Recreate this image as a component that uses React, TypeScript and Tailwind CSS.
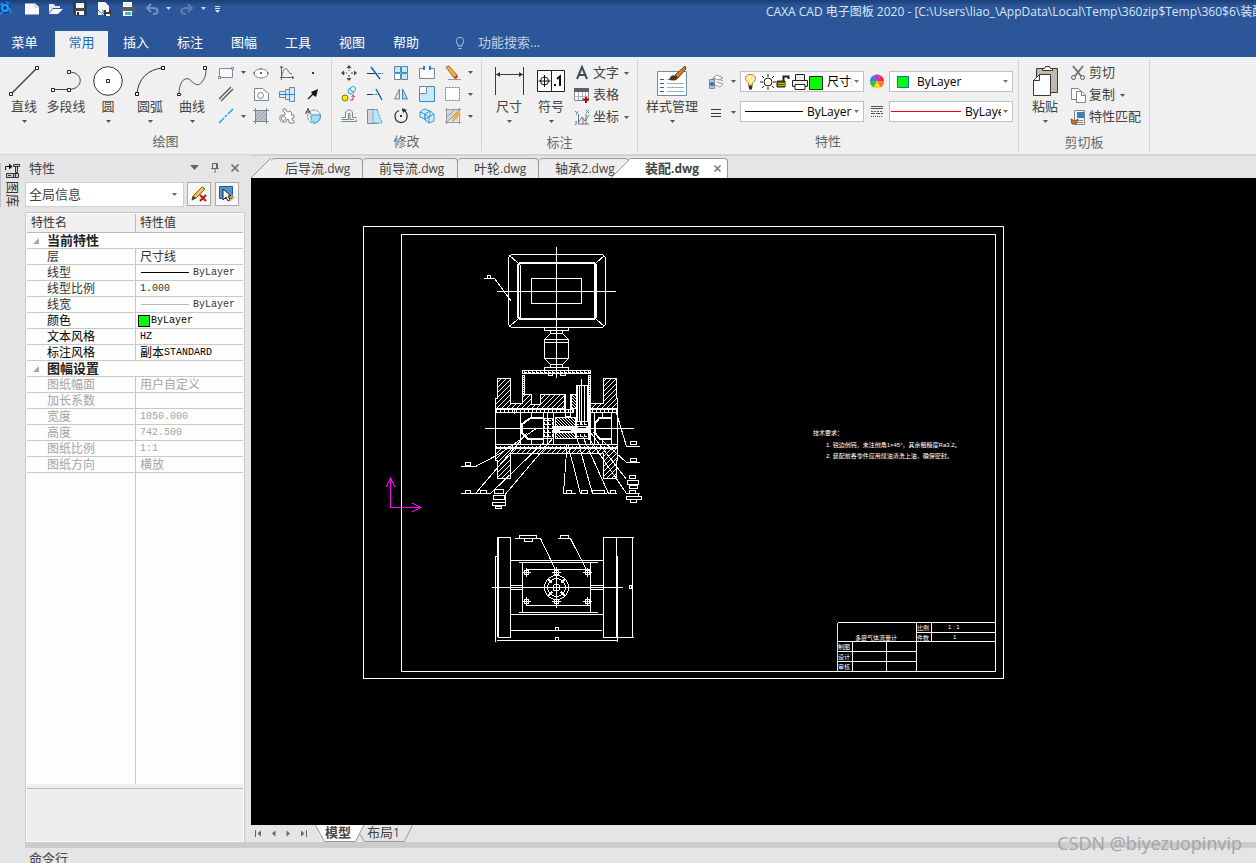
import type { ReactNode } from "react";

/* ---------- shared pieces ---------- */

function Caret({ className = "text-[#555]" }: { className?: string }) {
  return (
    <svg width="5" height="3" viewBox="0 0 5 3" className={`shrink-0 ${className}`} aria-hidden="true">
      <path d="M0 0H5L2.5 3Z" fill="currentColor" />
    </svg>
  );
}

function Icon({ children, size = 16 }: { children: ReactNode; size?: number }) {
  return (
    <svg width={size} height={size} viewBox={`0 0 ${size} ${size}`} fill="none" stroke="#7a8794" className="shrink-0" aria-hidden="true">
      {children}
    </svg>
  );
}

function TallButton({ label, icon, caret = true, wide = false }: { label: string; icon: ReactNode; caret?: boolean; wide?: boolean }) {
  return (
    <button type="button" className={`flex h-full flex-col items-center pt-1 ${wide ? "w-14" : "w-[42px]"}`}>
      <Icon size={30}>{icon}</Icon>
      <span className="h-6 whitespace-nowrap text-[13px] leading-5">{label}</span>
      {caret && <Caret />}
    </button>
  );
}

function ToolButton({ label, children }: { label: string; children: ReactNode }) {
  return (
    <button type="button" aria-label={label} className="flex items-center justify-center">
      <Icon>{children}</Icon>
    </button>
  );
}

function CaretButton({ label }: { label: string }) {
  return (
    <button type="button" aria-label={label} className="flex items-center justify-center">
      <Caret />
    </button>
  );
}

function Group({ title, className, children }: { title: string; className: string; children: ReactNode }) {
  return (
    <section className="my-[3px] flex shrink-0 flex-col border-r border-[#d2d2d2]">
      <div className={`mt-0.5 flex h-[66px] ${className}`}>{children}</div>
      <h2 className="pt-1 text-center text-[13px] leading-5 text-[#666]">{title}</h2>
    </section>
  );
}

function Combo({ label, value, lead, className }: { label: string; value: string; lead: ReactNode; className: string }) {
  return (
    <label className={`flex h-[21px] items-center border border-[#c0c0c0] bg-white pr-1 ${className}`}>
      {lead}
      <select aria-label={label} className="ml-1 h-[19px] w-full min-w-0 flex-1 appearance-none overflow-hidden bg-transparent text-xs text-black outline-none">
        <option>{value}</option>
      </select>
      <Caret className="ml-0.5 text-[#777]" />
    </label>
  );
}

/* ---------- title bar ---------- */

function QuickAccess() {
  return (
    <svg width="224" height="20" viewBox="0 0 224 20" fill="none" aria-hidden="true" className="shrink-0">
      <path d="M0 3L5 2L10 5L9 12L3 14L0 12" fill="#0b3f97" />
      <path d="M0 5L3 3M6 2L9 4M9 8L11 13M0 14L3 12" stroke="#1686ff" strokeWidth="2" />
      <circle cx="5" cy="8" r="3" stroke="#2ba0f5" strokeWidth="2" />
      <path d="M25 3.500H35L39 7V14.500H25Z" fill="#fff" />
      <path d="M35 3V7H39" stroke="#b6c0cf" />
      <path d="M49 4H54L55 6H60V8H53L49 13Z" fill="#e8e8e8" />
      <path d="M53 9H63L58 14H49Z" fill="#fff" />
      <path d="M74 3H86V15H75L74 14Z" fill="#414751" stroke="#252b33" />
      <path d="M76 3H84V8H76Z" fill="#f6f6f6" />
      <path d="M76 11H84V15H76Z" fill="#fff" />
      <path d="M77 12H79V15H77Z" fill="#333" />
      <path d="M98 2H105L109 6V15H98Z" fill="#f8f8f8" />
      <path d="M98 10C102 15 102 12 105 12M102 10L105 12L102 15" stroke="#1785cd" />
      <path d="M104 10H111V16H104Z" fill="#343b45" />
      <path d="M106 10H109V12H106ZM106 14H110V16H106Z" fill="#fff" />
      <path d="M123 2H132V7H123Z" fill="#fff" />
      <path d="M121 7H135V13H121Z" fill="#565c65" />
      <path d="M124 3H131V6H124Z" fill="#ececec" />
      <path d="M123 11H132V16H123Z" fill="#fff" />
      <path d="M125 12H131V15H125Z" fill="#2fb9ef" />
      <path d="M147 8H154C159 9 159 14 153 14M151 4L147 8L151 12" stroke="#7892be" strokeWidth="2" />
      <path d="M166 7H171L168.500 10Z" fill="#c7d2e4" />
      <path d="M192 8H185C180 9 180 14 186 14M188 4L192 8L188 12" stroke="#5e7cb0" strokeWidth="2" />
      <path d="M201 7H206L203.500 10Z" fill="#c7d2e4" />
      <path d="M215 6.500H220M215 8.500H220" stroke="#dce4f0" />
      <path d="M215 10H220L217.500 13Z" fill="#dce4f0" />
    </svg>
  );
}

const menus = ["插入", "标注", "图幅", "工具", "视图", "帮助"];

function TitleBar() {
  return (
    <header className="shrink-0 bg-[#2b579a] text-white">
      <div className="flex h-[31px] items-start justify-between overflow-hidden bg-linear-to-b from-[#1d3f76] to-[#2b579a] to-20%">
        <QuickAccess />
        <h1 className="w-[490px] shrink-0 overflow-hidden whitespace-nowrap text-xs leading-6 text-[#dce6f5]">
          {"CAXA CAD 电子图板 2020 - [C:\\Users\\liao_\\AppData\\Local\\Temp\\360zip$Temp\\360$6\\装配.dwg]"}
        </h1>
      </div>
      <nav className="flex h-[26px] text-[13px]">
        <button type="button" className="w-[55px] pb-0.5 pr-1.5">菜单</button>
        <button type="button" className="w-[53px] bg-[#f0f0f0] pb-0.5 text-[#1e66c0]">常用</button>
        <div className="ml-px flex">
          {menus.map((m) => (
            <button type="button" key={m} className="w-[54px] pb-0.5">{m}</button>
          ))}
        </div>
        <label className="ml-5 flex items-center gap-[11px] pb-0.5">
          <svg width="14" height="14" viewBox="0 0 14 14" fill="none" stroke="#b9c8e0" aria-hidden="true">
            <path d="M5 10V8.500C2.500 7 2.500 1.500 7 1.500S11.500 7 9 8.500V10ZM5.500 12.500H8.500" />
          </svg>
          <input aria-label="功能搜索" placeholder="功能搜索..." className="w-32 bg-transparent outline-none placeholder:text-[#c3cfe3]" />
        </label>
      </nav>
    </header>
  );
}

/* ---------- ribbon ---------- */

function DrawGroup() {
  return (
    <Group title="绘图" className="pl-[3px] pr-[5px]">
      <TallButton label="直线" icon={<><path d="M2 28L28 2" stroke="#444" strokeWidth="1.500" /><path d="M0.500 26.500H3.500V29.500H0.500ZM26.500 0.500H29.500V3.500H26.500Z" fill="#fff" stroke="#222" /></>} />
      <TallButton label="多段线" caret={false} icon={<><path d="M2 23.500H18C33 23 33 6 18 6" stroke="#444" /><path d="M0.500 22.500H3.500V25.500H0.500ZM16.500 22.500H19.500V25.500H16.500ZM16.500 4.500H19.500V7.500H16.500Z" fill="#fff" stroke="#222" /></>} />
      <TallButton label="圆" icon={<><circle cx="15" cy="15" r="14.300" fill="#fff" stroke="#333" /><path d="M13.500 13.500H16.500V16.500H13.500Z" fill="#fff" stroke="#222" /></>} />
      <TallButton label="圆弧" icon={<><path d="M2 28C3 13 13 3 28 2" stroke="#333" /><path d="M0.500 26.500H3.500V29.500H0.500ZM26.500 0.500H29.500V3.500H26.500Z" fill="#fff" stroke="#111" /></>} />
      <TallButton label="曲线" icon={<><path d="M2 28C2 18 6 11 12 13C17 17 20 22 25 16C28 12 29 9 29 3" stroke="#555" /><path d="M0.500 27.500H3.500V29.500H0.500ZM26.500 0.500H29.500V3.500H26.500Z" fill="#fff" stroke="#222" /></>} />
      <div className="grid grid-cols-[26px_9px_26px_26px_26px] grid-rows-3">
        <ToolButton label="矩形"><path d="M1.500 3.500H14.500V12.500H1.500Z" fill="#fafafa" /><path d="M0.500 11.500H2.500V13.500H0.500ZM13.500 2.500H15.500V4.500H13.500Z" fill="#fff" /></ToolButton>
        <CaretButton label="矩形选项" />
        <ToolButton label="椭圆"><ellipse cx="8" cy="8.500" rx="7" ry="4.500" fill="#fff" /><path d="M7.500 7.500H8.500V8.500H7.500ZM7.500 3.500H8.500M0.500 8H2M14 8H15.500" stroke="#333" /></ToolButton>
        <ToolButton label="公式曲线"><path d="M2.500 1V15M1 12.500H15M1 3L2.500 1L4 3M13 11L15 12.500L13 14M2.500 13C4 2 8 2 9 6C10 8 12 9 13 9" stroke="#666" /></ToolButton>
        <ToolButton label="点"><path d="M7 7H9V9H7Z" fill="#333" stroke="none" /></ToolButton>

        <ToolButton label="平行线"><path d="M1 13L13 1M3 15L15 3" stroke="#555" strokeWidth="1.300" /></ToolButton>
        <span />
        <ToolButton label="等距线"><path d="M1.500 2.500H9.500L15.500 7.500V14.500H1.500Z" fill="#fff" /><circle cx="7.500" cy="9.500" r="3" /></ToolButton>
        <ToolButton label="孔轴"><path d="M0.500 5.500H6.500V11.500H0.500ZM6.500 3.500H10.500V13.500H6.500ZM10.500 1.500H15.500V15.500H10.500Z" fill="#d2eafa" /><path d="M0 8.500H16" stroke="#168bdc" /></ToolButton>
        <ToolButton label="箭头"><path d="M3 13L8 8" stroke="#222" strokeWidth="1.500" /><path d="M13 3L11 11L8 9L6 6Z" fill="#111" stroke="none" /></ToolButton>

        <ToolButton label="构造线"><path d="M1 15L6 10M7 9L9 7M10 6L15 1" stroke="#19a7e8" strokeWidth="1.500" /></ToolButton>
        <CaretButton label="构造线选项" />
        <ToolButton label="填充"><path d="M3 3H13V13H3Z" fill="#bcc3ca" stroke="none" /><path d="M0 2.500H16M0 13.500H16M2.500 0V16M13.500 0V16" /><path d="M3 8L8 3M3 12L12 3M6 13L13 6M10 13L13 10" stroke="#9aa3ac" /></ToolButton>
        <ToolButton label="齿形"><path d="M4 3V1H7V3L9 4L11 3L13 5L12 7H15V10H13V12L15 13V15H10V12L8 11L7 14H3L1 12V8L4 7H6V5Z" fill="#fff" /><circle cx="4.500" cy="10.500" r="2" /></ToolButton>
        <ToolButton label="局部放大"><path d="M0.500 6L3 0.500L5.500 6M1.500 4H4.500" stroke="#333" /><circle cx="9" cy="8.500" r="6.500" strokeDasharray="3 1" /><path d="M6 7H15.500C15.500 12 12 15 9 15C7 14 6 12 6 7Z" fill="#a8dcf7" stroke="#309bd5" /></ToolButton>
      </div>
    </Group>
  );
}

function ModifyGroup() {
  return (
    <Group title="修改" className="pl-1 pr-1.5">
      <div className="grid grid-cols-[26px_26px_26px_26px_26px_9px] grid-rows-3">
        <ToolButton label="平移"><path d="M8 2V6M8 10V14M2 8H6M10 8H14" stroke="#444" strokeDasharray="2 1" /><path d="M8 0L10.500 3H5.500ZM8 16L10.500 13H5.500ZM0 8L3 5.500V10.500ZM16 8L13 5.500V10.500Z" fill="#444" stroke="none" /></ToolButton>
        <ToolButton label="裁剪"><path d="M0 8.500H7" stroke="#333" /><path d="M7 8.500H16" stroke="#1687d5" strokeDasharray="3 1" /><path d="M4 2L13 14" stroke="#1967b2" strokeWidth="1.500" /></ToolButton>
        <ToolButton label="阵列"><path d="M1.500 1.500H7.500V7.500H1.500ZM8.500 1.500H14.500V7.500H8.500ZM8.500 8.500H14.500V14.500H8.500Z" fill="#c5e8fa" stroke="#438db8" /><path d="M1.500 8.500H7.500V14.500H1.500Z" fill="#fff" stroke="#6688a0" /></ToolButton>
        <ToolButton label="打断"><path d="M4.500 3.500H0.500V13.500H15.500V3.500H11.500" fill="#fafafa" /><path d="M5 1V5M11 1V5" stroke="#1185d4" strokeWidth="2" /></ToolButton>
        <ToolButton label="删除"><path d="M1 2L4 1L12 10L9 13Z" fill="#f2ab40" stroke="#aa6d20" /><path d="M9 13L12 10L13 12L11 14Z" fill="#ae4038" stroke="none" /><path d="M3 14.500H16" stroke="#999" /></ToolButton>
        <CaretButton label="删除选项" />

        <ToolButton label="平移复制"><circle cx="4" cy="12" r="3" fill="#ffe800" stroke="#807a10" /><circle cx="10" cy="5" r="3" fill="#c8eafa" stroke="#43a3d3" /><circle cx="12" cy="3" r="2.500" fill="#e6f6ff" stroke="#43a3d3" /><path d="M9 14H12V10M10.500 11L12 9L14 11" stroke="#b24848" /></ToolButton>
        <ToolButton label="延伸"><path d="M0 8.500H5" stroke="#333" /><path d="M5 8.500H12" stroke="#1687d5" strokeDasharray="2 1" /><path d="M9 3L15 14" stroke="#1967b2" strokeWidth="1.500" /></ToolButton>
        <ToolButton label="镜像"><path d="M6.500 3V13H1.500Z" fill="#ddd" /><path d="M9.500 3V13H14.500Z" fill="#afddf8" stroke="#3383bd" /></ToolButton>
        <ToolButton label="缩放"><path d="M0.500 0.500H15.500V15.500H0.500Z" fill="#c5e8fa" stroke="#368dc2" /><path d="M0.500 0.500H7.500V7.500H0.500Z" fill="#fff" /></ToolButton>
        <ToolButton label="选择"><path d="M0.500 1.500H14.500V14.500H0.500Z" fill="#fff" strokeDasharray="2 1" stroke="#4b8bac" /></ToolButton>
        <CaretButton label="选择选项" />

        <ToolButton label="偏移"><path d="M0.500 9.500H4.500V5C5 1 11 1 11.500 5V9.500H15.500M0.500 13.500H15.500V11.500M0.500 11.500H7.500V5.500H9V11.500H13" /></ToolButton>
        <ToolButton label="拉伸"><path d="M0.500 1.500H10.500V15.500H0.500Z" fill="#d5d7da" /><path d="M6 1.500H10L15 15H6Z" fill="#bee6fb" stroke="#4e9cca" strokeDasharray="2 1" /></ToolButton>
        <ToolButton label="旋转"><path d="M9 2C16 3 16 14 8 14.500C1 14 0 5 6 2.500" stroke="#333" strokeWidth="1.300" /><path d="M9 0L14 2L10 5Z" fill="#333" stroke="none" /><path d="M7 7H9V9H7Z" fill="#333" stroke="none" /></ToolButton>
        <ToolButton label="分解"><path d="M1 4L5 1L11 3V9L6 11L1 9ZM6 6L11 3L15 6V13L10 15L6 12Z" fill="#d5effd" stroke="#3c98cf" /><path d="M1 4L6 6V12M10 9L15 6M10 9V15M6 6L10 9" stroke="#3c98cf" /></ToolButton>
        <ToolButton label="编辑填充"><path d="M2 2H13V13H2Z" fill="#d3d7db" stroke="none" /><path d="M0 1.500H16M0 14.500H16M1.500 0V16M14.500 0V16M2 9L9 2M2 14L14 2M7 14L14 7" stroke="#999" /><path d="M7 11L13 3L16 6L10 12Z" fill="#f1ad43" stroke="none" /></ToolButton>
        <CaretButton label="编辑填充选项" />
      </div>
    </Group>
  );
}

function RowButton({ label, caret, children }: { label: string; caret?: boolean; children: ReactNode }) {
  return (
    <button type="button" className="flex h-[22px] items-center gap-[3px] whitespace-nowrap text-[13px]">
      <Icon>{children}</Icon>
      <span className="mr-0.5">{label}</span>
      {caret && <Caret />}
    </button>
  );
}

function NoteGroup() {
  return (
    <Group title="标注" className="pl-1.5 pr-2">
      <TallButton label="尺寸" icon={<><path d="M1.500 1V29M29.500 1V29M2 8.500H29" stroke="#333b48" /><path d="M2 8.500L6 6V11ZM29 8.500L25 6V11Z" fill="#333b48" stroke="none" /></>} />
      <TallButton label="符号" icon={<><path d="M1.500 4.500H28.500V25.500H1.500ZM15.500 4.500V25.500" fill="#fff" stroke="#222" /><circle cx="8.500" cy="15" r="4" stroke="#111" /><path d="M2.500 15H14.500M8.500 9V21" stroke="#111" /><path d="M18 18H20V20H18Z" fill="#111" stroke="none" /><path d="M21 13L24 10.500V20" stroke="#111" strokeWidth="2" /></>} />
      <div className="flex flex-col pl-0.5">
        <RowButton label="文字" caret><path d="M3 14L8 2L13 14M5 10H11" stroke="#454c55" strokeWidth="2" /></RowButton>
        <RowButton label="表格"><path d="M0.500 1.500H14.500V13.500H0.500Z" fill="#fff" /><path d="M0 1H15V5H0Z" fill="#5b6168" stroke="none" /><path d="M4.500 5V13M8.500 5V13M11.500 5V10M0 9.500H15" stroke="#aab2ba" /><path d="M9 12.500H15M12 10V16" stroke="#b10a0a" strokeWidth="2" /></RowButton>
        <RowButton label="坐标" caret><path d="M4.500 5V15H15M4 14L8 8L11 12L15 6M9 9V15M12 5V15" stroke="#777" /><path d="M1 2L3 4M4 2L2 6M12 1L15 4M15 1L12 4M1 13H3L1 16H3" stroke="#3b9bd5" /></RowButton>
      </div>
    </Group>
  );
}

function PropertyGroup() {
  return (
    <Group title="特性" className="pl-1.5 pr-[5px]">
      <TallButton
        wide
        label="样式管理"
        icon={<><path d="M0.500 5.500H29.500V29.500H0.500Z" fill="#fff" stroke="#6b8eaa" /><path d="M3 13.500H7M3 17.500H7M3 21.500H7M3 25.500H7" stroke="#47607b" /><path d="M10 13.500H20M10 17.500H27M10 21.500H27M10 25.500H27" stroke="#9fb0c2" /><path d="M18 9L28 0L29 3L21 12Z" fill="#cc7a2c" stroke="#734015" /><path d="M12 14C13 10 16 8 19 10L21 12C18 16 15 14 12 14Z" fill="#54321d" stroke="none" /></>}
      />
      <div className="flex w-10 flex-col gap-2 pl-2 pt-2">
        <button type="button" aria-label="图层工具" className="flex h-[23px] items-center justify-between pr-1">
          <Icon><path d="M5 4L9 1L15 4L11 6ZM5 4V7M9 8L15 10L12 13L7 11M15 7L11 5" fill="#fff" stroke="#929ba4" /><path d="M1.500 5.500H6.500V14.500H1.500Z" fill="#b5c6d4" /><circle cx="4" cy="10" r="2" fill="#1773ba" stroke="none" /></Icon>
          <Caret />
        </button>
        <button type="button" aria-label="线宽工具" className="flex h-[23px] items-center justify-between pr-1">
          <Icon><path d="M3 4.500H13M3 8.500H13M3 11.500H13" stroke="#30384a" /></Icon>
          <Caret />
        </button>
      </div>
      <div className="flex flex-col gap-[9px] pt-[9px]">
        <Combo
          label="图层"
          value="尺寸线"
          className="w-[124px]"
          lead={
            <svg width="82" height="19" viewBox="0 0 82 19" fill="none" stroke="#222" className="shrink-0" aria-hidden="true">
              <path d="M7.500 13V11C2 7 5 2 9.500 2.500C14 2 17 7 11.500 11V13Z" fill="#ffeeb0" stroke="#b08727" />
              <path d="M7.500 14.500H11.500M8 16.500H11" stroke="#333" strokeWidth="2" />
              <circle cx="27" cy="10" r="4" fill="#fffbe8" />
              <path d="M27 2V5M27 15V18M19 10H22M32 10H35M21 4L23 6M31 14L33 16M33 4L31 6M23 14L21 16" />
              <path d="M36 9H44V15H36Z" fill="#565a00" />
              <path d="M42.500 9V4.500H47.500V7" strokeWidth="2" />
              <path d="M37 11.500H44M37 13.500H44" stroke="#c6bd00" />
              <path d="M54.500 8V2.500H63.500V8M51.500 8.500H66.500V14.500H51.500Z" fill="#eee" />
              <path d="M54 12.500H64V17.500H54Z" fill="#fff" />
              <path d="M68.500 4.500H81.500V17.500H68.500Z" fill="#00ff00" />
            </svg>
          }
        />
        <Combo label="线型" value="ByLayer" className="w-[124px]" lead={<span className="ml-1 w-[58px] shrink-0 border-t border-black" />} />
      </div>
      <div className="flex w-[25px] flex-col items-center gap-4 pt-3">
        <svg width="18" height="15" viewBox="0 0 18 15" aria-hidden="true">
          <path d="M9 7.500L2 7A7 7 0 0 1 5.500 1.500Z" fill="#3378ee" />
          <path d="M9 7.500L5.500 1.500A7 7 0 0 1 12.500 1.500Z" fill="#b03ad5" />
          <path d="M9 7.500L12.500 1.500A7 7 0 0 1 16 7.500Z" fill="#f32b36" />
          <path d="M9 7.500H16A7 7 0 0 1 12.500 13.500Z" fill="#f77b20" />
          <path d="M9 7.500L12.500 13.500A7 7 0 0 1 5.500 13.500Z" fill="#ffda18" />
          <path d="M9 7.500L5.500 13.500A7 7 0 0 1 2 7Z" fill="#3cb94b" />
        </svg>
        <svg width="14" height="14" viewBox="0 0 14 14" stroke="#555" aria-hidden="true">
          <path d="M1 1.500H13M1 3.500H13" />
          <path d="M1 6.500H13" strokeDasharray="2 1" />
          <path d="M1 8.500H13" strokeDasharray="4 1" />
          <path d="M1 11.500H13" strokeDasharray="1 1" />
        </svg>
      </div>
      <div className="flex flex-col gap-[9px] pt-[9px]">
        <Combo label="颜色" value="ByLayer" className="w-[124px]" lead={<span className="ml-[7px] mr-1 size-3 shrink-0 border border-[#0d74c8] bg-[#00ff00]" />} />
        <Combo label="线宽" value="ByLayer" className="w-[124px]" lead={<span className="ml-px w-[70px] shrink-0 border-t border-[#ff0000]" />} />
      </div>
    </Group>
  );
}

function ClipboardGroup() {
  return (
    <Group title="剪切板" className="pl-[5px] pr-1.5">
      <TallButton label="粘贴" icon={<><path d="M6.500 2.500H27.500V26.500H6.500Z" fill="#c3b7a8" stroke="#383838" /><path d="M12.500 4.500V2.500H14.500L15.500 0.500H19.500L20.500 2.500H22.500V4.500Z" fill="#fff" stroke="#333" /><path d="M9.500 8.500H20.500V29.500H3.500V14.500Z" fill="#fff" stroke="#2f3944" /><path d="M9.500 8.500V14.500H3.500" stroke="#2f3944" /></>} />
      <div className="flex flex-col pl-1">
        <RowButton label="剪切"><path d="M3 1L11 11M13 1L5 11" stroke="#70767c" strokeWidth="2" /><circle cx="3.500" cy="12.500" r="2" stroke="#555" /><circle cx="12.500" cy="12.500" r="2" stroke="#555" /></RowButton>
        <RowButton label="复制" caret><path d="M1.500 1.500H8.500L11.500 4.500V12.500H1.500Z" fill="#fff" /><path d="M6.500 4.500H12L15.500 8V15.500H6.500Z" fill="#fff" /><path d="M11.500 5V8.500H15" /></RowButton>
        <RowButton label="特性匹配"><path d="M4.500 1.500H14.500V15.500H4.500Z" fill="#f3f3f3" /><path d="M7 3H14V9H7Z" fill="#397fb9" stroke="none" /><path d="M7 11.500H13M7 13.500H13" /><path d="M1 10L5 12L8 10L6 15H2Z" fill="#c9782d" stroke="#8c4c19" /></RowButton>
      </div>
    </Group>
  );
}

/* ---------- left side ---------- */

type Row = { name: string; cjk?: string; latin?: string; swatch?: string; off?: boolean; dark?: boolean };

const current: Row[] = [
  { name: "层", cjk: "尺寸线" },
  { name: "线型", latin: "ByLayer", swatch: "line" },
  { name: "线型比例", latin: "1.000" },
  { name: "线宽", latin: "ByLayer", swatch: "thin" },
  { name: "颜色", latin: "ByLayer", swatch: "box", dark: true },
  { name: "文本风格", latin: "HZ", dark: true },
  { name: "标注风格", cjk: "副本", latin: "STANDARD", dark: true },
];

const sheet: Row[] = [
  { name: "图纸幅面", cjk: "用户自定义", off: true },
  { name: "加长系数", off: true },
  { name: "宽度", latin: "1050.000", off: true },
  { name: "高度", latin: "742.500", off: true },
  { name: "图纸比例", latin: "1:1", off: true },
  { name: "图纸方向", cjk: "横放", off: true },
];

function SectionRow({ title }: { title: string }) {
  return (
    <tr>
      <th colSpan={2} scope="rowgroup" className="h-4 border-b border-[#c8c8c8] p-0 text-left">
        <button type="button" className="flex h-[15px] items-center gap-2 pl-1.5 text-[13px] font-bold leading-[15px] text-[#222]">
          <svg width="6" height="6" viewBox="0 0 6 6" aria-hidden="true"><path d="M6 0V6H0Z" fill="#a5a5a5" /></svg>
          {title}
        </button>
      </th>
    </tr>
  );
}

function PropRow({ row }: { row: Row }) {
  const tone = row.off ? "text-[#a5a5a5]" : row.dark ? "text-black" : "text-[#333]";
  return (
    <tr className={tone}>
      <td className="h-4 border-b border-r border-[#c8c8c8] p-0 pl-5 leading-[15px]">{row.name}</td>
      <td className="h-4 border-b border-[#c8c8c8] p-0 pl-1 leading-[15px]">
        <div className="flex h-[15px] items-center">
          {row.swatch === "line" && <span className="ml-px mr-1 w-12 border-t border-black" />}
          {row.swatch === "thin" && <span className="ml-px mr-1 w-12 border-t border-[#bbb]" />}
          {row.swatch === "box" && <span className="-ml-0.5 mr-px size-3 border border-black bg-[#00ff00]" />}
          {row.cjk && <span>{row.cjk}</span>}
          {row.latin && <span className="font-['Liberation_Mono',monospace] text-[10px]">{row.latin}</span>}
        </div>
      </td>
    </tr>
  );
}

function PropertiesPanel() {
  return (
    <aside className="flex w-[220px] shrink-0 flex-col text-[#444]">
      <div className="flex h-[27px] items-center pb-0.5 pl-1 pr-1.5 text-[13px]">
        <h2 className="flex-1 leading-6">特性</h2>
        <div className="flex items-center gap-3">
          <button type="button" aria-label="面板菜单"><svg width="9" height="5" viewBox="0 0 9 5"><path d="M0 0H9L4.500 5Z" fill="#666" /></svg></button>
          <button type="button" aria-label="固定"><svg width="8" height="10" viewBox="0 0 8 10" fill="none" stroke="#666"><path d="M1.500 0.500H6.500V5.500H1.500ZM0 5.500H8M4 6V10M5.500 1V5" /></svg></button>
          <button type="button" aria-label="关闭面板"><svg width="8" height="8" viewBox="0 0 8 8" stroke="#666" strokeWidth="1.500"><path d="M0.500 0.500L7.500 7.500M7.500 0.500L0.500 7.500" /></svg></button>
        </div>
      </div>
      <div className="flex h-[30px] items-start gap-[3px]">
        <label className="flex h-[25px] w-[159px] items-center border border-[#d0d0d0] bg-white pl-[3px] pr-1.5">
          <select aria-label="选择对象" className="min-w-0 flex-1 appearance-none bg-transparent text-[13px] outline-none"><option>全局信息</option></select>
          <Caret className="text-[#666]" />
        </label>
        <button type="button" aria-label="清除选择" className="flex size-6 items-center justify-center border border-[#aaa] bg-[#f8f8f8]">
          <Icon><path d="M1 14L2 10L11 1L14 3L5 12Z" fill="#f5c54c" stroke="#7a5319" /><path d="M1 14L2 10L5 12Z" fill="#333" stroke="none" /><path d="M9 9L15 15M15 9L9 15" stroke="#c3151e" strokeWidth="2" /></Icon>
        </button>
        <button type="button" aria-label="快速选择" className="ml-px flex size-6 items-center justify-center border border-[#aaa] bg-[#f8f8f8]">
          <Icon><path d="M0.500 0.500H13.500V12.500H0.500Z" fill="#4d94d4" stroke="#1e5a96" /><path d="M4 3V14L7 11L9 15L11 14L9 10H12Z" fill="#fff" stroke="#222" /><path d="M14 8L10 12H13L11 16L16 11H13Z" fill="#f9a51a" stroke="none" /></Icon>
        </button>
      </div>
      <div className="flex min-h-0 flex-1 flex-col border-x border-t border-[#c8c8c8] bg-[#fdfdfd] p-px">
        <table className="w-full table-fixed border-separate border-spacing-0 text-xs">
          <colgroup><col className="w-[109px]" /><col /></colgroup>
          <thead>
            <tr className="bg-[#f0f0f0] text-left leading-[18px] text-[#333]">
              <th scope="col" className="h-[19px] border-b border-r border-[#bbb] p-0 pl-1 font-normal">特性名</th>
              <th scope="col" className="h-[19px] border-b border-[#bbb] p-0 pl-1 font-normal">特性值</th>
            </tr>
          </thead>
          <tbody>
            <SectionRow title="当前特性" />
            {current.map((r) => <PropRow key={r.name} row={r} />)}
            <SectionRow title="图幅设置" />
            {sheet.map((r) => <PropRow key={r.name} row={r} />)}
          </tbody>
        </table>
        <div className="flex min-h-0 flex-1"><div className="w-[109px] border-r border-[#c8c8c8]" /></div>
        <div className="h-[57px] shrink-0 border-t-4 border-[#eee] bg-[#eee]"><div className="border-t border-[#bbb]" /></div>
      </div>
    </aside>
  );
}

function LibraryStrip() {
  return (
    <div className="w-[25px] shrink-0 pt-2">
      <button type="button" className="flex w-5 flex-col items-center border-l border-[#c0c0c0] pl-1 text-[13px] leading-4 text-[#333]">
        <svg width="15" height="16" viewBox="0 0 15 16" fill="none" stroke="#333" aria-hidden="true">
          <path d="M0.500 7V3.500H5" stroke="#111" />
          <path d="M4 0.500L7.500 3.500L4 6.500Z" fill="#111" stroke="none" />
          <path d="M8.500 1.500H14.500V3.500H8.500ZM10.500 3.500H12.500V9.500H10.500Z" fill="#ccc" />
          <path d="M1.500 10.500H13.500V14.500H1.500ZM3 12.500H6M8.500 11V14M10.500 11V14" fill="#ccc" />
        </svg>
        <span className="mt-0.5 [text-orientation:sideways] [writing-mode:vertical-rl]">图库</span>
      </button>
    </div>
  );
}

/* ---------- drawing ---------- */

const bolts = [[526.5, 572.5], [556.5, 572.5], [587.5, 572.5], [526.5, 601.5], [556.5, 601.5], [587.5, 601.5]];

function Drawing() {
  return (
    <svg viewBox="251 178 1005 647" preserveAspectRatio="xMinYMin meet" className="block h-full w-full" fill="none" stroke="#fff" shapeRendering="crispEdges" role="img" aria-label="装配图">
      <defs>
        <pattern id="hatch" width="5" height="5" patternUnits="userSpaceOnUse"><path d="M-1 6L6 -1" stroke="#fff" /></pattern>
        <pattern id="dense" width="3" height="3" patternUnits="userSpaceOnUse"><path d="M-1 -1L4 4" stroke="#fff" /></pattern>
        <pattern id="dots" width="2" height="2" patternUnits="userSpaceOnUse"><path d="M0 0H1V1H0ZM1 1H2V2H1Z" fill="#fff" stroke="none" /></pattern>
        <pattern id="checks" width="4" height="4" patternUnits="userSpaceOnUse"><path d="M0 0H3V1H0ZM0 2H1V4H0Z" fill="#fff" stroke="none" /></pattern>
      </defs>

      <path d="M363.500 226.500H1003.500V678.500H363.500ZM401.500 234.500H995.500V671.500H401.500Z" />
      <path d="M390.500 507.500V478M386 487L390.500 478L395 487M390.500 507.500H421M412 503L421 507.500L412 512" stroke="#ff00ff" />

      {/* display head */}
      <path d="M511.500 254.500H602.500L605.500 257.500V324.500L602.500 327.500H511.500L508.500 324.500V257.500Z" />
      <path d="M520 263H594L596 265V317L594 319H520L518 317V265Z" strokeWidth="2" />
      <path d="M520.500 264.500V317.500M594.500 264.500V317.500M509.500 255.500L518 263M604.500 255.500L596 263M509.500 326.500L518 319M604.500 326.500L596 319" />
      <path d="M531.500 278.500H581.500V303.500H531.500Z" />
      <path d="M497 291.500H616M556.500 247V378" />
      <path d="M484 278.500H494.500L511.500 301.500M487.500 278V275.500H490.500V278" />

      {/* neck */}
      <path d="M544.500 327.500H568.500V330.500H544.500ZM550.500 330.500H562.500V333.500H550.500ZM550.500 333.500L544.500 339.500V358.500L550.500 364.500H562.500L568.500 358.500V339.500L562.500 333.500M544.500 339.500H568.500M544.500 342.500H568.500M544.500 358.500H568.500M550.500 364.500V367.500M562.500 364.500V367.500M544.500 370.500V367.500H568.500V370.500" />

      {/* housing */}
      <path d="M522.500 370.500H590.500V373.500H522.500Z" fill="url(#checks)" />
      <path d="M522.500 374.500V394.500M524.500 374.500V394.500M588.500 374.500V402.500M590.500 374.500V402.500" />
      <path d="M522 375H525V394H522ZM588 375H591V402H588Z" fill="url(#dots)" stroke="none" />
      <path d="M548.500 373.500V375.500H552.500V373.500M560.500 373.500V375.500H565.500V373.500" />

      {/* flanges and body */}
      <path d="M497.500 378.500H510.500V403.500H522.500V394.500H531.500V404.500H540.500V394.500H564.500V408.500H495.500V398.500H497.500Z" fill="url(#hatch)" />
      <path d="M603.500 378.500H616.500V398.500H617.500V408.500H587.500V403.500H603.500Z" fill="url(#hatch)" />
      <path d="M495.500 448.500H617.500V460.500H616.500V478.500H603.500V453.500H510.500V478.500H497.500V460.500H495.500Z" fill="url(#hatch)" />
      <path d="M495.500 409.500H573.500V412.500H495.500ZM587.500 409.500H617.500V412.500H587.500ZM495.500 444.500H617.500V447.500H495.500Z" fill="url(#checks)" />
      <path d="M495.500 408V448M617.500 408V448M520.500 412V445M611.500 412V445M514.500 408V414M590.500 404V445M594.500 412V445" />
      <path d="M485 428.500H634" />
      <path d="M543.500 417.500H531.500L521.500 424.500V432.500L527.500 438.500H543.500M611.500 417.500H599.500L594.500 424.500V432.500L599.500 438.500H611.500" strokeWidth="2" />
      <path d="M531.500 413V417M531.500 439V444M543.500 412V445M547.500 412V445M553.500 412V445M602.500 413V417M602.500 439V444" />
      <path d="M543.500 418.500H553.500V438.500H543.500Z" fill="url(#checks)" />
      <path d="M555.500 417.500H575.500V426.500H555.500ZM555.500 432.500H575.500V438.500H555.500Z" fill="url(#dense)" />
      <path d="M576.500 421.500H588.500V438.500H576.500Z" fill="url(#checks)" />
      <path d="M554 426H589V433H554Z" fill="#fff" stroke="none" />
      <path d="M560 430.500H571M578 427.500H586" stroke="#000" />
      <path d="M565.500 394V416.500H570.500V394" />
      <path d="M571.500 394.500H576.500V408.500H571.500Z" fill="url(#dense)" />
      <path d="M576.500 385.500H587.500V421.500H576.500ZM579.500 385V421M584.500 385V421M581.500 379V424" />
      <path d="M576.500 385.500V421.500M588.500 394.500V440" strokeWidth="2" />

      {/* leaders */}
      <path d="M616.500 413L626.500 446.500H640M593 432L626.500 462.500H640M590 432L626.500 479.500M588 437L626.500 493.500H640" />
      <path d="M537 428L501 453L475.500 466.500H461M527 433L475.500 493.500H461M543 443L490.500 493.500H476M553 438L506 493.500" />
      <path d="M567 445L563.500 493.500H576M568 445L580.500 493.500H588M577 438L592.500 493.500H607M583 437L608.500 493.500H617" />
      <path d="M630.500 441.500H636.500V444.500H630.500ZM630.500 458.500H636.500V461.500H630.500ZM465.500 462.500H470.500V465.500H465.500ZM465.500 490.500H470.500V493H465.500ZM480.500 490.500H486.500V493H480.500ZM566.500 490.500H571.500V493H566.500ZM581.500 490.500H587.500V493H581.500ZM592.500 490.500H604.500V493H592.500ZM610.500 490.500H615.500V493H610.500Z" />
      <path d="M629.500 475.500H635.500V478.500H629.500ZM627.500 480.500H638.500V484.500H627.500ZM629.500 485.500H637.500V488.500H629.500ZM629.500 490.500H635.500V493.500H629.500ZM626.500 496.500H641.500V499.500H626.500ZM630.500 499.500H636.500V502.500H630.500ZM638.500 480V484M638.500 493V496" />
      <path d="M494.500 489.500H503.500V493.500H494.500ZM493.500 495.500H504.500V499.500H493.500ZM492.500 502.500H505.500V505.500H492.500ZM495.500 506.500H501.500V508.500H495.500ZM505.500 493V505" />

      {/* plan view */}
      <path d="M498.500 537.500H510.500V637.500H498.500ZM603.500 537.500H616.500V637.500H603.500ZM603.500 537.500H633.500M632.500 537.500V637.500M603.500 637.500H633.500" />
      <path d="M498.500 556.500H495.500V641.500M617.500 556V641.500M497.500 537V637M497 640.500H617M510 630.500H602" />
      <path d="M555.500 630V627.500H558.500V630M555.500 640V637.500H558.500V640M629.500 585.500H631.500V588.500H629.500Z" />
      <path d="M510.500 560.500H603.500M519 562.500H598M510.500 614.500H603.500M519 612.500H598M522.500 562V612M590.500 562V612M527 569.500H590M527 605.500H590" />
      <path d="M492 587.500H623M510 585.500H522M510 589.500H522M590 585.500H603M590 589.500H603M556.500 567V608" />
      <circle cx="556.500" cy="587.500" r="12" />
      <circle cx="556.500" cy="587.500" r="9" />
      <circle cx="556.500" cy="587.500" r="3.500" />
      <path d="M548 579L552 583M561 583L565 579M548 596L552 592M561 592L565 596" strokeWidth="2" />
      {bolts.map(([x, y]) => (
        <g key={`${x}-${y}`}>
          <circle cx={x} cy={y} r="2.500" />
          <path d={`M${x - 4.5} ${y}H${x + 4.5}M${x} ${y - 4.5}V${y + 4.5}`} />
        </g>
      ))}
      <path d="M515 538.500H540.500L556.500 572M519.500 538V535.500H536.500V538M524.500 538.500V541.500H532.500V538.500M558 538.500H570.500L587.500 572M560.500 538V535.500H568.500V538" />

      {/* title block */}
      <path d="M837.500 622.500H995.500M916.500 622.500V671.500M931.500 622.500V641.500M916.500 632.500H995.500M837.500 641.500H995.500M852.500 641.500V671.500M886.500 641.500V671.500M837.500 651.500H916.500M837.500 661.500H916.500" />
      <path d="M837.500 622.500V671.500" stroke="#cfe8cf" />

      <g fill="#fff" stroke="none" className="font-['Liberation_Sans','Noto_Sans_CJK_SC',sans-serif] text-[6px]">
        <text x="813" y="435">技术要求：</text>
        <text x="826" y="447">1. 锐边倒钝，未注倒角1×45°，其余粗糙度Ra3.2。</text>
        <text x="826" y="458">2. 装配前各零件应用煤油清洗上油，确保密封。</text>
        <text x="855" y="640">多层气体流量计</text>
        <text x="917" y="630">比例</text>
        <text x="917" y="640">件数</text>
        <text x="948" y="629">1 : 1</text>
        <text x="953" y="639">1</text>
        <text x="838" y="649">制图</text>
        <text x="838" y="659">设计</text>
        <text x="838" y="669">审核</text>
      </g>
    </svg>
  );
}

/* ---------- documents ---------- */

const docs = [
  { name: "后导流", size: "w-[92px] pl-3.5" },
  { name: "前导流", size: "w-[95px] pl-4" },
  { name: "叶轮", size: "w-[81px] pl-4" },
  { name: "轴承2", size: "w-[90px] pl-4" },
];

function DocTabs() {
  return (
    <div className="flex h-[23px] items-end overflow-hidden border-t border-[#d0d0d0] text-[13px] text-[#444]">
      <svg width="20" height="20" viewBox="0 0 20 20" aria-hidden="true" className="shrink-0"><path d="M0 20L19.500 0.500H20V20Z" fill="#eee" /><path d="M0 20L19.500 0.500H20" fill="none" stroke="#999" /></svg>
      {docs.map((d) => (
        <button type="button" key={d.name} className={`h-5 shrink-0 whitespace-nowrap rounded-t-sm border-r border-t border-[#999] bg-[#eee] pb-px text-left leading-4 ${d.size}`}>
          {d.name}<span className="text-xs">.dwg</span>
        </button>
      ))}
      <svg width="20" height="20" viewBox="0 0 20 20" aria-hidden="true" className="relative -ml-[18px] shrink-0"><path d="M0 20L19.500 0.500H20V20Z" fill="#fff" /><path d="M0 20L19.500 0.500H20" fill="none" stroke="#999" /></svg>
      <div className="flex h-5 w-[97px] shrink-0 items-center justify-between rounded-tr-sm border-r border-t border-[#999] bg-white pb-px pl-3.5 pr-1.5">
        <button type="button" className="font-bold leading-4">装配<span className="text-xs">.dwg</span></button>
        <button type="button" aria-label="关闭文档"><svg width="7" height="7" viewBox="0 0 7 7" stroke="#777" strokeWidth="1.500"><path d="M0.500 0.500L6.500 6.500M6.500 0.500L0.500 6.500" /></svg></button>
      </div>
    </div>
  );
}

function LayoutTabs() {
  return (
    <div className="flex h-[17px] shrink-0 items-stretch text-[13px] text-[#444]">
      <div className="flex w-16 items-center justify-around pr-1">
        <button type="button" aria-label="第一个"><svg width="7" height="7" viewBox="0 0 7 7"><path d="M0 0H1V7H0ZM6 0.500V6.500L2.500 3.500Z" fill="#666" /></svg></button>
        <button type="button" aria-label="上一个"><svg width="7" height="7" viewBox="0 0 7 7"><path d="M5.500 0.500V6.500L2 3.500Z" fill="#666" /></svg></button>
        <button type="button" aria-label="下一个"><svg width="7" height="7" viewBox="0 0 7 7"><path d="M1.500 0.500V6.500L5 3.500Z" fill="#666" /></svg></button>
        <button type="button" aria-label="最后一个"><svg width="7" height="7" viewBox="0 0 7 7"><path d="M6 0H7V7H6ZM1 0.500V6.500L4.500 3.500Z" fill="#666" /></svg></button>
      </div>
      <svg width="10" height="17" viewBox="0 0 10 17" aria-hidden="true"><path d="M0.500 0L9.500 16.500H10V0Z" fill="#fff" /><path d="M0.500 0L9.500 16.500H10" fill="none" stroke="#999" /></svg>
      <button type="button" className="border-b border-[#999] bg-white pb-0.5 font-bold leading-[14px]">模型</button>
      <svg width="16" height="17" viewBox="0 0 16 17" aria-hidden="true"><path d="M0 0H13L4.500 16.500H0Z" fill="#fff" /><path d="M0 16.500H4.500L13 0M8.500 8.500L13.500 16.500H16" fill="none" stroke="#999" /></svg>
      <button type="button" className="border-b border-[#999] pb-0.5 leading-[14px]">布局<span className="text-xs">1</span></button>
      <svg width="14" height="17" viewBox="0 0 14 17" aria-hidden="true"><path d="M0 16.500H4.500L12.500 0" fill="none" stroke="#999" /></svg>
    </div>
  );
}

export default function App() {
  return (
    <div className="relative flex h-screen flex-col overflow-hidden bg-[#e5e5e5] font-['Open_Sans','Noto_Sans_CJK_SC',sans-serif] text-[#444]">
      <TitleBar />
      <div className="flex h-[98px] shrink-0 overflow-hidden border-b border-[#d5d5d5] bg-[#f0f0f0]">
        <DrawGroup />
        <ModifyGroup />
        <NoteGroup />
        <PropertyGroup />
        <ClipboardGroup />
      </div>
      <div className="flex min-h-0 flex-1">
        <LibraryStrip />
        <div className="flex min-w-0 flex-1 flex-col">
          <div className="flex min-h-0 flex-1">
            <PropertiesPanel />
            <main className="ml-1.5 flex min-w-0 flex-1 flex-col">
              <DocTabs />
              <div className="min-h-0 flex-1 bg-black"><Drawing /></div>
              <LayoutTabs />
            </main>
          </div>
          <div className="h-1.5 shrink-0 bg-[#ccc]" />
          <div className="h-[15px] shrink-0 overflow-hidden pl-1 text-[13px] leading-5">命令行</div>
        </div>
      </div>
      <p className="pointer-events-none absolute bottom-2 right-3.5 text-lg leading-6 text-[#a3a3a3]">CSDN @biyezuopinvip</p>
    </div>
  );
}
